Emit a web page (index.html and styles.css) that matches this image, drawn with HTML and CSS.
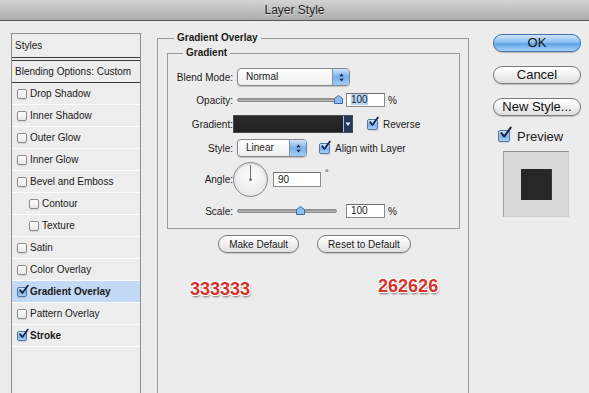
FILE: index.html
```html
<!DOCTYPE html>
<html lang="en">
<head>
  <meta charset="UTF-8">
  <meta name="viewport" content="width=device-width, initial-scale=1.0">
  <title>Layer Style</title>
  <link rel="stylesheet" href="styles.css">
</head>
<body>
  <div class="titlebar">Layer Style</div>

  <div class="dialog">
    <!-- list of effects -->
    <div class="style-list">
      <div class="list-head">Styles</div>
      <div class="list-head blending">Blending Options: Custom</div>
      <div class="list-row"><span class="check"></span>Drop Shadow</div>
      <div class="list-row"><span class="check"></span>Inner Shadow</div>
      <div class="list-row"><span class="check"></span>Outer Glow</div>
      <div class="list-row"><span class="check"></span>Inner Glow</div>
      <div class="list-row"><span class="check"></span>Bevel and Emboss</div>
      <div class="list-row sub"><span class="check"></span>Contour</div>
      <div class="list-row sub"><span class="check"></span>Texture</div>
      <div class="list-row"><span class="check"></span>Satin</div>
      <div class="list-row"><span class="check"></span>Color Overlay</div>
      <div class="list-row on selected"><span class="check checked"><svg viewBox="0 0 12 12"><path d="M2.2 5.6 L4.8 8.8 L10.8 0.6"/></svg></span>Gradient Overlay</div>
      <div class="list-row"><span class="check"></span>Pattern Overlay</div>
      <div class="list-row on"><span class="check checked"><svg viewBox="0 0 12 12"><path d="M2.2 5.6 L4.8 8.8 L10.8 0.6"/></svg></span>Stroke</div>
    </div>

    <!-- settings -->
    <fieldset class="group outer">
      <legend>Gradient Overlay</legend>
      <fieldset class="group inner">
        <legend>Gradient</legend>

        <div class="field r1">
          <label>Blend Mode:</label>
          <div class="select blend">
            <span class="select-text">Normal</span>
            <span class="stepper"><svg viewBox="0 0 8 12"><path d="M4 1.5 L6.5 4.5 H1.5 Z M4 10.5 L6.5 7.5 H1.5 Z"/></svg></span>
          </div>
        </div>

        <div class="field">
          <label>Opacity:</label>
          <div class="slider">
            <span class="track"></span>
            <svg class="knob" style="left: 97px" viewBox="0 0 9 9"><path d="M4.5 0.5 L8.5 3.5 V8.5 H0.5 V3.5 Z"/></svg>
          </div>
          <div class="num-input"><span class="sel">100</span></div>
          <span class="unit">%</span>
        </div>

        <div class="field">
          <label>Gradient:</label>
          <div class="gradient-swatch">
            <span class="swatch-arrow"><svg viewBox="0 0 6 6"><path d="M0.5 1.5 H5.5 L3 5 Z"/></svg></span>
          </div>
          <span class="check checked opt reverse"><svg viewBox="0 0 12 12"><path d="M2.2 5.6 L4.8 8.8 L10.8 0.6"/></svg></span>
          <span class="opt-label">Reverse</span>
        </div>

        <div class="field">
          <label>Style:</label>
          <div class="select linear">
            <span class="select-text">Linear</span>
            <span class="stepper"><svg viewBox="0 0 8 12"><path d="M4 1.5 L6.5 4.5 H1.5 Z M4 10.5 L6.5 7.5 H1.5 Z"/></svg></span>
          </div>
          <span class="check checked opt align"><svg viewBox="0 0 12 12"><path d="M2.2 5.6 L4.8 8.8 L10.8 0.6"/></svg></span>
          <span class="opt-label">Align with Layer</span>
        </div>

        <div class="field r5">
          <label>Angle:</label>
          <div class="dial"><span class="dial-hand"></span><span class="dial-dot"></span></div>
          <div class="num-input angle">90</div>
          <span class="deg">°</span>
        </div>

        <div class="field r6">
          <label>Scale:</label>
          <div class="slider">
            <span class="track"></span>
            <svg class="knob" style="left: 59px" viewBox="0 0 9 9"><path d="M4.5 0.5 L8.5 3.5 V8.5 H0.5 V3.5 Z"/></svg>
          </div>
          <div class="num-input">100</div>
          <span class="unit">%</span>
        </div>
      </fieldset>

      <div class="defaults">
        <button class="pill">Make Default</button>
        <button class="pill">Reset to Default</button>
      </div>

      <div class="notes">
        <span class="note">333333</span>
        <span class="note up">262626</span>
      </div>
    </fieldset>

    <!-- buttons and preview -->
    <div class="actions">
      <button class="btn primary">OK</button>
      <button class="btn">Cancel</button>
      <button class="btn">New Style...</button>
      <div class="preview-check">
        <span class="check checked big"><svg viewBox="0 0 12 12"><path d="M2.2 5.6 L4.8 8.8 L10.8 0.6"/></svg></span>
        Preview
      </div>
      <div class="preview"><div class="preview-square"></div></div>
    </div>
  </div>
</body>
</html>
```

FILE: styles.css
```css
/* Global */
* {
  margin: 0;
  padding: 0;
  box-sizing: border-box;
}

body {
  width: 589px;
  height: 393px;
  overflow: hidden;
  background: #ececec;
  color: #1a1a1a;
  font-family: "Liberation Sans", Arial, sans-serif;
  font-size: 10px;
}

/* Window title */
.titlebar {
  height: 21px;
  line-height: 20px;
  text-align: center;
  font-size: 12px;
  color: #1e1e1e;
  text-shadow: 0 1px 0 rgba(255, 255, 255, 0.5);
  background: linear-gradient(#d4d4d4, #ababab);
  border-bottom: 1px solid #555;
}

.dialog {
  display: flex;
  align-items: flex-start;
  padding: 12px 0 0 11px;
}

/* Checkboxes */
.check {
  display: inline-block;
  position: relative;
  flex: none;
  width: 10px;
  height: 10px;
  border: 1px solid #8c8c8c;
  border-radius: 2px;
  background: linear-gradient(#ffffff, #e6e6e6);
  box-shadow: 0 1px 1px rgba(0, 0, 0, 0.12);
}

.check.checked {
  background: linear-gradient(#d4e7fb, #7fb2ec 55%, #a9d0f6);
  border-color: #4f78ab;
}

.check svg {
  position: absolute;
  left: 0;
  top: -3px;
  width: 11px;
  height: 11px;
  overflow: visible;
}

.check svg path {
  fill: none;
  stroke: #16244a;
  stroke-width: 1.9;
  stroke-linecap: round;
  stroke-linejoin: round;
}

/* Left list */
.style-list {
  flex: none;
  width: 130px;
  height: 360px;
  border: 1px solid #8e8e8e;
  border-bottom: none;
  background: #ededed;
}

.list-head {
  height: 24px;
  line-height: 23px;
  padding-left: 3px;
  border-bottom: 1px solid #3c3c3c;
}

.list-head.blending {
  height: 23px;
  line-height: 21px;
  margin-top: 2px;
  border-top: 1px solid #3c3c3c;
}

.list-row {
  display: flex;
  align-items: center;
  height: 22px;
  padding-left: 5px;
  border-bottom: 1px solid #fbfbfb;
}

.list-row .check {
  margin-right: 3px;
}

.list-row.sub {
  padding-left: 17px;
}

.list-row.on {
  font-weight: bold;
}

.list-row.selected {
  background: #c3d9f5;
}

/* Group boxes */
.group {
  border: 1px solid #999;
  min-inline-size: 0;
}

.group legend {
  font-weight: bold;
  line-height: 12px;
  padding: 0 3px;
}

.group.outer {
  flex: none;
  width: 312px;
  height: 361px;
  margin: -1px 0 0 16px;
  padding-top: 3px;
  border-bottom: none;
}

.group.outer legend {
  margin-left: 16px;
}

.group.inner {
  margin: 0 8px 0 9px;
  padding: 7px 0 4px;
}

.group.inner legend {
  margin-left: 15px;
}

/* Rows of the gradient group */
.field {
  display: flex;
  align-items: center;
  height: 24px;
}

.field.r1 {
  height: 22px;
}

.field.r5 {
  height: 38px;
}

.field.r6 {
  height: 26px;
}

.field label {
  flex: none;
  width: 65px;
  margin-right: 4px;
  text-align: right;
}

/* Popup menus */
.select {
  display: flex;
  height: 18px;
  border: 1px solid #868686;
  border-radius: 4px;
  background: linear-gradient(#ffffff, #eeeeee);
  box-shadow: 0 1px 1px rgba(0, 0, 0, 0.18);
  overflow: hidden;
}

.select.blend {
  width: 113px;
}

.select.linear {
  width: 70px;
}

.select-text {
  flex: 1;
  padding-left: 8px;
  line-height: 16px;
}

.stepper {
  display: flex;
  align-items: center;
  justify-content: center;
  width: 17px;
  border-left: 1px solid #6e93c4;
  background: linear-gradient(#d2e6fa, #78aeea 50%, #a5cdf5);
}

.stepper svg {
  width: 7px;
  height: 11px;
  fill: #1b2a47;
}

/* Sliders */
.slider {
  position: relative;
  flex: none;
  width: 104px;
  height: 12px;
}

.track {
  display: block;
  width: 100px;
  height: 4px;
  margin-top: 4px;
  border-radius: 2px;
  background: linear-gradient(#8a8a8a, #c4c4c4);
  border: 1px solid #8d8d8d;
}

.knob {
  position: absolute;
  top: 1px;
  width: 9px;
  height: 9px;
}

.knob path {
  fill: #8fbdee;
  stroke: #3f6da6;
  stroke-width: 1;
}

/* Number boxes */
.num-input {
  flex: none;
  width: 39px;
  height: 14px;
  margin-left: 5px;
  padding-left: 4px;
  line-height: 12px;
  background: #fff;
  border: 1px solid #8b8b8b;
  border-top-color: #6f6f6f;
}

.num-input .sel {
  background: #b5d4f6;
}

.num-input.angle {
  width: 48px;
  height: 15px;
  line-height: 13px;
}

.unit {
  margin-left: 3px;
  align-self: center;
}

.deg {
  align-self: flex-start;
  margin: 8px 0 0 4px;
  font-size: 9px;
}

/* Gradient picker */
.gradient-swatch {
  display: flex;
  justify-content: flex-end;
  flex: none;
  width: 120px;
  height: 18px;
  margin-left: -4px;
  border: 1px solid #4a4a4a;
  background: linear-gradient(#2b2b2b, #202020);
}

.swatch-arrow {
  display: flex;
  align-items: center;
  justify-content: center;
  width: 9px;
  background: #243a5c;
  border-left: 1px solid #9fc3ec;
}

.swatch-arrow svg {
  width: 6px;
  height: 6px;
  fill: #e8f0fa;
}

.check.opt {
  width: 11px;
  height: 11px;
}

.check.reverse {
  margin-left: 14px;
}

.check.align {
  margin-left: 12px;
}

.opt-label {
  margin-left: 5px;
}

/* Angle dial */
.dial {
  position: relative;
  flex: none;
  width: 35px;
  height: 35px;
  margin-left: -4px;
  border: 1px solid #8a8a8a;
  border-radius: 50%;
  background: radial-gradient(circle at 50% 40%, #fdfdfd, #e2e2e2);
  box-shadow: inset 0 1px 2px rgba(0, 0, 0, 0.15);
}

.dial-hand {
  position: absolute;
  left: 16px;
  top: 2px;
  width: 1px;
  height: 15px;
  background: #6a6a6a;
}

.dial-dot {
  position: absolute;
  left: 15px;
  top: 15px;
  width: 3px;
  height: 3px;
  border-radius: 50%;
  background: #777;
}

/* Small pill buttons */
.defaults {
  display: flex;
  justify-content: center;
  gap: 18px;
  margin-top: 6px;
  padding-left: 3px;
}

.pill {
  height: 18px;
  padding: 0 10px;
  font-family: inherit;
  font-size: 10px;
  color: #1a1a1a;
  border: 1px solid #7a7a7a;
  border-radius: 9px;
  background: linear-gradient(#ffffff, #f0f0f0 50%, #e2e2e2);
  box-shadow: 0 1px 1px rgba(0, 0, 0, 0.15);
}

/* Colour notes */
.notes {
  display: flex;
  align-items: flex-start;
  margin-top: 26px;
  padding-left: 32px;
}

.note {
  font-size: 18px;
  font-weight: bold;
  line-height: 20px;
  color: #d8322a;
  text-shadow:
    1px 0 0 #fff, -1px 0 0 #fff, 0 1px 0 #fff, 0 -1px 0 #fff,
    1px 1px 0 #fff, -1px -1px 0 #fff, 1px -1px 0 #fff, -1px 1px 0 #fff,
    1px 2px 2px rgba(0, 0, 0, 0.55);
}

.note.up {
  margin: -3px 0 0 128px;
}

/* Right column */
.actions {
  flex: none;
  width: 88px;
  margin: 1px 0 0 24px;
}

.btn {
  display: block;
  width: 88px;
  height: 18px;
  margin-bottom: 14px;
  font-family: inherit;
  font-size: 13px;
  line-height: 16px;
  color: #111;
  border: 1px solid #7b7b7b;
  border-radius: 9px;
  background: linear-gradient(#ffffff, #f1f1f1 50%, #dedede);
  box-shadow: 0 1px 1px rgba(0, 0, 0, 0.2);
}

.btn.primary {
  border-color: #4470ad;
  background: linear-gradient(#cfe4fb, #8fc0f1 45%, #5ea2ea 55%, #a8d3fb);
}

.preview-check {
  display: flex;
  align-items: center;
  margin: -1px 0 0 5px;
  height: 14px;
  font-size: 13px;
}

.check.big {
  width: 12px;
  height: 12px;
  margin-right: 7px;
}

.check.big svg {
  width: 13px;
  height: 13px;
  top: -4px;
}

.preview {
  display: flex;
  align-items: center;
  justify-content: center;
  width: 66px;
  height: 66px;
  margin: 8px 0 0 10px;
  background: #d8d8d8;
  border: 1px solid #cdcdcd;
  border-top-color: #8e8e8e;
  border-left-color: #a0a0a0;
}

.preview-square {
  width: 31px;
  height: 31px;
  background: #272727;
  border-right: 1px solid #3a3a3a;
}
```
